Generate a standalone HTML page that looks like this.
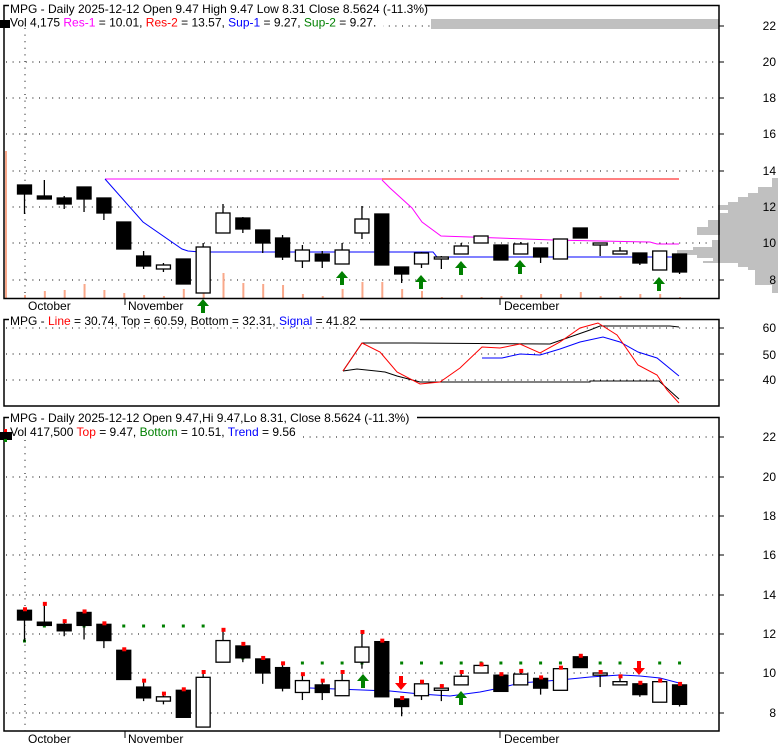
<!DOCTYPE html>
<html><head><meta charset="utf-8"><style>
html,body{margin:0;padding:0;background:#fff;}
svg{display:block;font-family:"Liberation Sans",Arial,sans-serif;font-size:12px;}
</style></head><body>
<svg id="s" width="780" height="745" xmlns="http://www.w3.org/2000/svg">
<rect width="780" height="745" fill="#fff"/>
<g id="bg"></g>
<g id="vp" fill="#c0c0c0"></g>
<rect x="431" y="19" width="288" height="10" fill="#c0c0c0"/>
<g id="g"></g>
<rect x="4" y="5.5" width="715" height="293" fill="none" stroke="#000" stroke-width="1.5"/>
<rect x="4" y="319.5" width="715" height="86.5" fill="none" stroke="#000" stroke-width="1.5"/>
<rect x="4" y="417.5" width="715" height="313.5" fill="none" stroke="#000" stroke-width="1.5"/>
<rect x="9" y="0" width="416" height="14" fill="#fff"/>
<rect x="9" y="15" width="374" height="13" fill="#fff"/>
<text x="10" y="13">MPG - Daily 2025-12-12 Open 9.47  High 9.47  Low 8.31  Close 8.5624 (-11.3%)</text>
<text x="10" y="26.5">Vol 4,175 <tspan fill="#ff00ff">Res-1</tspan> = 10.01, <tspan fill="#ff0000">Res-2</tspan> = 13.57, <tspan fill="#0000ff">Sup-1</tspan> = 9.27, <tspan fill="#008000">Sup-2</tspan> = 9.27.</text>
<rect x="0" y="20" width="10" height="8" fill="#000"/>
<rect x="9" y="313" width="351" height="14" fill="#fff"/>
<text x="10" y="325">MPG - <tspan fill="#ff0000">Line</tspan> = 30.74, Top = 60.59, Bottom = 32.31, <tspan fill="#0000ff">Signal</tspan> = 41.82</text>
<rect x="9" y="411" width="408" height="14" fill="#fff"/>
<rect x="9" y="425" width="292" height="14" fill="#fff"/>
<text x="10" y="422">MPG - Daily 2025-12-12 Open 9.47,Hi 9.47,Lo 8.31, Close 8.5624 (-11.3%)</text>
<text x="10" y="436">Vol 417,500 <tspan fill="#ff0000">Top</tspan> = 9.47, <tspan fill="#008000">Bottom</tspan> = 10.51, <tspan fill="#0000ff">Trend</tspan> = 9.56</text>
<rect x="0" y="432" width="12" height="8" fill="#000"/>
<rect x="4" y="429" width="3" height="3" fill="#f00"/><rect x="4" y="439" width="3" height="3" fill="#080"/>
<g text-anchor="end">
<text x="776" y="30">22</text><text x="776" y="66">20</text><text x="776" y="102">18</text><text x="776" y="138">16</text><text x="776" y="175">14</text><text x="776" y="211">12</text><text x="776" y="247">10</text><text x="776" y="284">8</text>
<text x="776" y="332">60</text><text x="776" y="359">50</text><text x="776" y="384">40</text>
<text x="776" y="441">22</text><text x="776" y="481">20</text><text x="776" y="520">18</text><text x="776" y="559">16</text><text x="776" y="599">14</text><text x="776" y="638">12</text><text x="776" y="677">10</text><text x="776" y="717">8</text>
</g>
<text x="28" y="310">October</text><text x="128" y="310">November</text><text x="504" y="310">December</text>
<line x1="125" y1="298" x2="125" y2="305" stroke="#000"/><line x1="500" y1="298" x2="500" y2="305" stroke="#000"/>
<text x="28" y="743">October</text><text x="128" y="743">November</text><text x="504" y="743">December</text>
<line x1="125" y1="731" x2="125" y2="738" stroke="#000"/><line x1="500" y1="731" x2="500" y2="738" stroke="#000"/>
</svg>
<script>
var NS="http://www.w3.org/2000/svg",g=document.getElementById('g'),bg=document.getElementById('bg'),vp=document.getElementById('vp');
function el(p,t,a){var e=document.createElementNS(NS,t);for(var k in a)e.setAttribute(k,a[k]);p.appendChild(e);return e;}
[[178,9,772],[187,6,758],[193,4,748],[197,5,738],[202,3,728],[205,5,718],[210,3,728],[213,7,720],[220,7,708],[227,8,697],[235,5,720],[240,7,712],[247,3,693],[250,5,677],[255,3,697],[258,3,713],[261,2,703],[263,4,738],[267,3,748],[270,15,755],[285,8,772]].forEach(function(b){el(vp,'rect',{x:b[2],y:b[0],width:778-b[2],height:b[1]});});
var dot={stroke:"#000","stroke-width":1,"stroke-dasharray":"1,5.6",fill:"none"};
[26,62,98,134,171,207,243,280].forEach(function(y){el(bg,'line',Object.assign({x1:6,x2:719,y1:y,y2:y},dot));el(bg,'line',{x1:719,x2:724,y1:y,y2:y,stroke:"#000"});});
[328,354,380].forEach(function(y){el(bg,'line',Object.assign({x1:6,x2:719,y1:y,y2:y},dot));el(bg,'line',{x1:719,x2:724,y1:y,y2:y,stroke:"#000"});});
[437,477,516,555,595,634,673,713].forEach(function(y){el(bg,'line',Object.assign({x1:6,x2:719,y1:y,y2:y},dot));el(bg,'line',{x1:719,x2:724,y1:y,y2:y,stroke:"#000"});});
el(bg,'line',Object.assign({x1:25,x2:25,y1:28,y2:298},dot));
el(bg,'line',Object.assign({x1:25,x2:25,y1:440,y2:731},dot));
var C=[[185,185,194,214,1],[180,196,199,199,1],[196,198,204,209,1],[187,187,199,212,1],[198,198,213,220,1],[222,222,249,249,1],[251,256,266,269,1],[263,265,269,272,0],[259,259,284,284,1],[243,247,293,293,0],[204,213,233,233,0],[217,218,229,233,1],[230,230,243,253,1],[235,238,257,260,1],[245,250,261,268,0],[251,254,261,268,1],[243,250,264,264,0],[206,219,233,239,0],[214,214,265,265,1],[267,267,274,283,1],[252,253,264,268,0],[256,257,259,269,0],[243,246,254,254,0],[236,236,243,243,0],[245,245,260,260,1],[242,244,254,254,0],[248,248,257,263,1],[239,239,259,259,0],[228,228,238,238,1],[243,243,245,256,0],[247,251,254,254,0],[253,253,263,265,1],[251,251,270,270,0],[254,254,272,274,1]];
var V=[295,291,290,284,290,293,295,296,289,293,273,283,284,285,294,296,289,282,282,289,291,297,295,297,296,295,294,294,292,296,296,294,294,297];
function X(i){return 24.5+19.85*i;}
function L(y){return 673+(y-243)*1.0815;}
el(g,'rect',{x:5,y:151,width:2,height:147,fill:"#f9a88a"});
V.forEach(function(v,i){el(g,'rect',{x:X(i)-0.5,y:v,width:2,height:298-v,fill:"#f9a88a"});});
function pl(pts,col,w){el(g,'polyline',{points:pts,fill:"none",stroke:col,"stroke-width":w||1});}
pl("105,179 382,179","#ff00ff");pl("382,179 679,179","#ff0000");
pl("382,180 390,188 412,208 422,222 441,236 553,240 650,242 657,244 679,244","#ff00ff");
pl("105,179 143,222 182,249 188,251 200,252 433,252 437,257 672,257","#0000ff");
pl("343,371 362,343 412,343 550,344 590,330 600,326 670,326 679,327","#000");
pl("343,371 357,369 385,372 397,376 420,382 590,382 590,381 659,381 679,399","#000");
pl("482,358 502,358 520,354 540,355 560,349 580,342 603,337 620,342 638,352 657,358 679,376","#0000ff");
pl("343,371 362,343 380,352 397,372 420,384 440,382 460,368 482,347 500,348 520,344 540,353 560,342 580,328 598,323 617,335 638,365 657,375 667,390 679,403","#ff0000");
pl("310,688 390,691 420,694 450,696 480,692 500,688 520,683 560,680 590,677 620,675 640,676 660,678 679,683","#0000ff");
[5,6,7,8,9].forEach(function(i){el(g,'rect',{x:X(i)-1.5,y:624.5,width:3,height:3,fill:"#008000"});});
[14,15,16,17,19,20,21,22,23,24,25,26,27,29,30,32,33].forEach(function(i){el(g,'rect',{x:X(i)-1.5,y:661.5,width:3,height:3,fill:"#008000"});});
[[0,641],[1,626],[3,626],[10,658],[11,658]].forEach(function(a){el(g,'rect',{x:X(a[0])-1.5,y:a[1]-1.5,width:3,height:3,fill:"#008000"});});
function candle(i,c,f){var x=X(i),wt=f(c[0]),bt=f(c[1]),bb=f(c[2]),wb=f(c[3]);
 el(g,'line',{x1:x,x2:x,y1:wt,y2:wb,stroke:"#000","stroke-width":1.3});
 var h=Math.max(bb-bt,1);
 el(g,'rect',{x:x-7,y:bt,width:14,height:h,fill:c[4]?"#000":"#fff",stroke:"#000","stroke-width":1.3});}
C.forEach(function(c,i){candle(i,c,function(y){return y;});candle(i,c,L);
 el(g,'rect',{x:X(i)-1.5,y:L(c[0])-3,width:4,height:4,fill:"#ff0000"});});
function up(x,y,col){el(g,'polygon',{points:(x)+","+y+" "+(x+6)+","+(y+7)+" "+(x+2)+","+(y+7)+" "+(x+2)+","+(y+14)+" "+(x-2)+","+(y+14)+" "+(x-2)+","+(y+7)+" "+(x-6)+","+(y+7),fill:col});}
function dn(x,y,col){el(g,'polygon',{points:(x)+","+(y+14)+" "+(x+6)+","+(y+7)+" "+(x+2)+","+(y+7)+" "+(x+2)+","+y+" "+(x-2)+","+y+" "+(x-2)+","+(y+7)+" "+(x-6)+","+(y+7),fill:col});}
up(342,271,"#008000");up(203,299,"#008000");up(421,275,"#008000");up(461,261,"#008000");up(520,260,"#008000");up(659,277,"#008000");
up(363,674,"#008000");up(461,691,"#008000");dn(401,676,"#ff0000");dn(639,661,"#ff0000");
</script>
</body></html>
